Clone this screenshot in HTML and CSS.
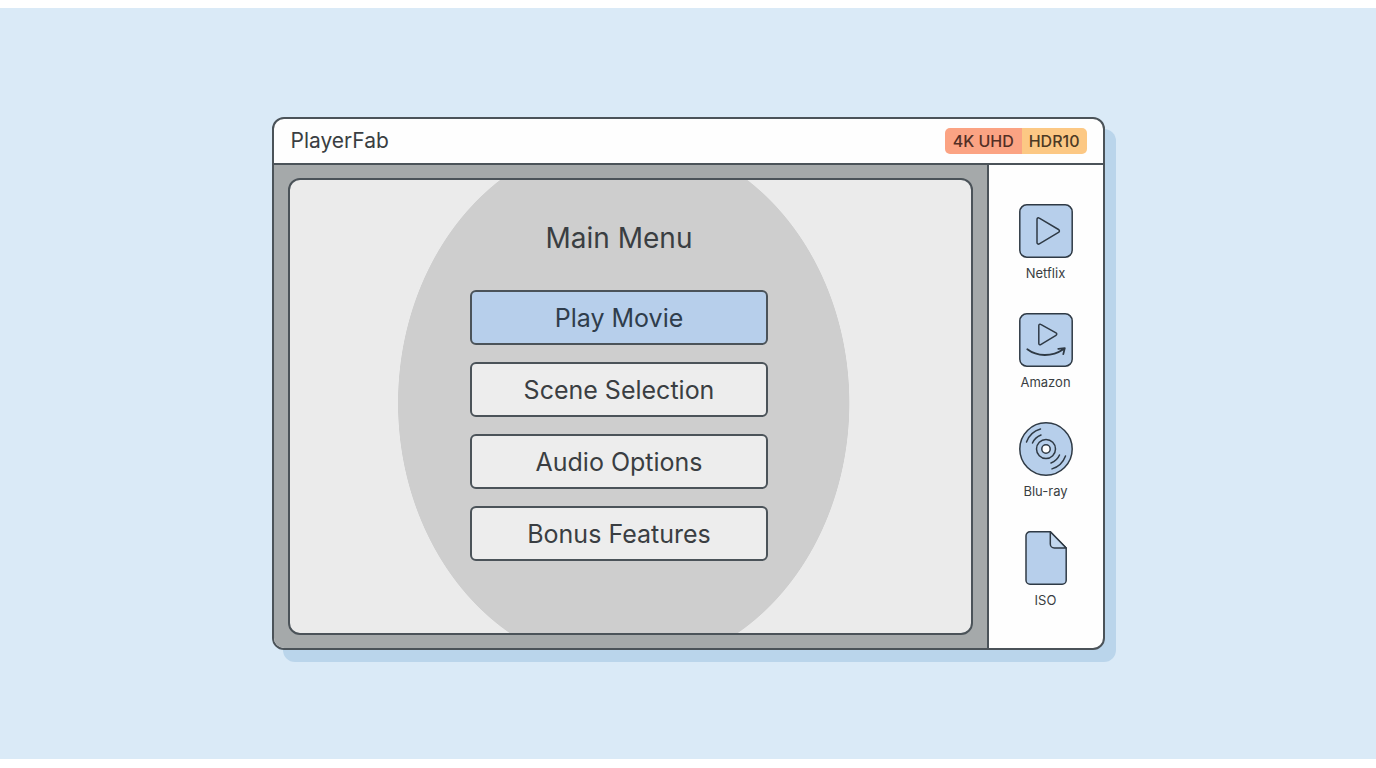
FILE: index.html
```html
<!DOCTYPE html>
<html lang="en">
<head>
<meta charset="utf-8">
<meta name="viewport" content="width=device-width, initial-scale=1">
<title>PlayerFab</title>
<link rel="stylesheet" href="styles.css">
</head>
<body class="page">
<div class="backdrop">
  <div class="window">
    <header class="titlebar">
      <h1 class="app-name">PlayerFab</h1>
      <div class="badges">
        <span class="badge badge-uhd">4K UHD</span>
        <span class="badge badge-hdr">HDR10</span>
      </div>
    </header>
    <div class="content">
      <main class="stage">
        <div class="screen">
          <h2 class="menu-title">Main Menu</h2>
          <nav class="menu" aria-label="Main Menu">
            <button class="menu-button menu-button-active" type="button">Play Movie</button>
            <button class="menu-button" type="button">Scene Selection</button>
            <button class="menu-button" type="button">Audio Options</button>
            <button class="menu-button" type="button">Bonus Features</button>
          </nav>
        </div>
      </main>
      <aside class="sources">
        <button class="source" type="button">
          <svg class="source-icon" viewBox="0 0 54 54" aria-hidden="true">
            <rect class="fill" x="0.8" y="0.8" width="52.4" height="52.4" rx="7"/>
            <path d="M18 15.500v23c0 1.300 1.200 2 2.300 1.400l19.200-11.500c1.200-.7 1.200-2.200 0-2.900L20.300 14.100c-1.100-.7-2.300 0-2.300 1.400z"/>
          </svg>
          <span class="source-label">Netflix</span>
        </button>
        <button class="source" type="button">
          <svg class="source-icon" viewBox="0 0 54 54" aria-hidden="true">
            <rect class="fill" x="0.8" y="0.8" width="52.4" height="52.4" rx="7"/>
            <path d="M19.800 12.500v18c0 1.100 1 1.700 1.900 1.100l15.300-9.300c1-.6 1-1.800 0-2.400l-15.300-8.500c-.9-.6-1.900 0-1.900 1.100z"/>
            <path class="smile" d="M8.300 36.300c9.700 7.400 24.500 7.800 36.200 0M39.300 35.800l6.500-.7-1.500 6"/>
          </svg>
          <span class="source-label">Amazon</span>
        </button>
        <button class="source" type="button">
          <svg class="source-icon" viewBox="0 0 54 54" aria-hidden="true">
            <circle class="fill" cx="27" cy="27" r="26.200"/>
            <circle cx="27" cy="27" r="9.500"/>
            <circle class="hole" cx="27" cy="27" r="4.200"/>
            <path d="M7.500 20A21 21 0 0 1 21.500 7M13.500 21A15 15 0 0 1 22 13"/>
            <path d="M46.500 34A21 21 0 0 1 33 46.900M40.500 33A15 15 0 0 1 32 41"/>
          </svg>
          <span class="source-label">Blu-ray</span>
        </button>
        <button class="source" type="button">
          <svg class="source-icon" viewBox="0 0 54 54" aria-hidden="true">
            <path class="fill" d="M11 .8h20.300L47.200 17v32.200a4 4 0 0 1-4 4H11a4 4 0 0 1-4-4V4.800a4 4 0 0 1 4-4z"/>
            <path class="fold" d="M31.300.8v12.200a4 4 0 0 0 4 4h11.900z"/>
          </svg>
          <span class="source-label">ISO</span>
        </button>
      </aside>
    </div>
  </div>
</div>
</body>
</html>
```
FILE: styles.css
```css
* {
  box-sizing: border-box;
}

.page {
  --line: #4b5359;
  --blue: #b7cfeb;
  --text: #3a3e42;
  margin: 0;
  min-height: 100vh;
  padding: 8px 0 9px;
  display: flex;
  background: #fff;
  color: var(--text);
  font-family: Inter, "Liberation Sans", sans-serif;
}

.backdrop {
  flex: 1;
  display: flex;
  align-items: center;
  justify-content: center;
  padding: 24px;
  background: #daeaf7;
}

.window {
  flex: 0 1 833px;
  border: 2px solid var(--line);
  border-radius: 12px;
  background: #fefefe;
  box-shadow: 11px 12px 0 #bad5eb;
  overflow: hidden;
}

.titlebar {
  display: flex;
  align-items: center;
  justify-content: space-between;
  padding: 8px 16px 8px 17px;
  border-bottom: 2px solid var(--line);
}

.app-name {
  margin: 0;
  font-size: 21px;
  line-height: 28px;
  font-weight: 400;
}

.badges {
  display: flex;
  border-radius: 5px;
  overflow: hidden;
}

.badge {
  padding: 0 7px;
  font-size: 16px;
  line-height: 26px;
  font-weight: 500;
}

.badge-uhd {
  padding: 0 8px;
  background: #fba383;
  color: #532f25;
}

.badge-hdr {
  background: #fcc884;
  color: #4c3a24;
}

.content {
  display: flex;
}

.stage {
  flex: 1;
  padding: 13px 14px;
  background: #a5a9aa;
}

.screen {
  display: flex;
  flex-direction: column;
  align-items: center;
  padding: 38px 22px 72px 0;
  border: 2px solid var(--line);
  border-radius: 12px;
  background: radial-gradient(ellipse 226px 267px at 49% 223px, #cecece 99.7%, #ebebeb 100%);
}

.menu-title {
  margin: 0 0 32px;
  font-size: 28px;
  line-height: 40px;
  font-weight: 400;
}

.menu {
  display: grid;
  gap: 17px;
  width: 298px;
}

.menu-button {
  height: 55px;
  padding: 0;
  border: 2px solid var(--line);
  border-radius: 6px;
  background: #ededed;
  color: var(--text);
  font: inherit;
  font-size: 25px;
}

.menu-button-active {
  background: #b7cfeb;
  color: #2f3d4c;
}

.sources {
  flex: 0 0 116px;
  display: flex;
  flex-direction: column;
  align-items: center;
  justify-content: center;
  gap: 30px;
  border-left: 2px solid var(--line);
}

.source {
  display: flex;
  flex-direction: column;
  align-items: center;
  gap: 6px;
  padding: 0;
  border: 0;
  background: none;
  color: inherit;
  font: inherit;
}

.source-icon {
  width: 54px;
  height: 54px;
  fill: none;
  stroke: #2f3a45;
  stroke-width: 1.5;
  stroke-linecap: round;
  stroke-linejoin: round;
}

.source-icon .fill {
  fill: var(--blue);
}

.source-icon .hole {
  fill: #fefefe;
}

.source-icon .smile {
  stroke-width: 1.8;
}

.source-icon .fold {
  fill: #c3d8ef;
}

.source-label {
  font-size: 13px;
  line-height: 19px;
}
```
